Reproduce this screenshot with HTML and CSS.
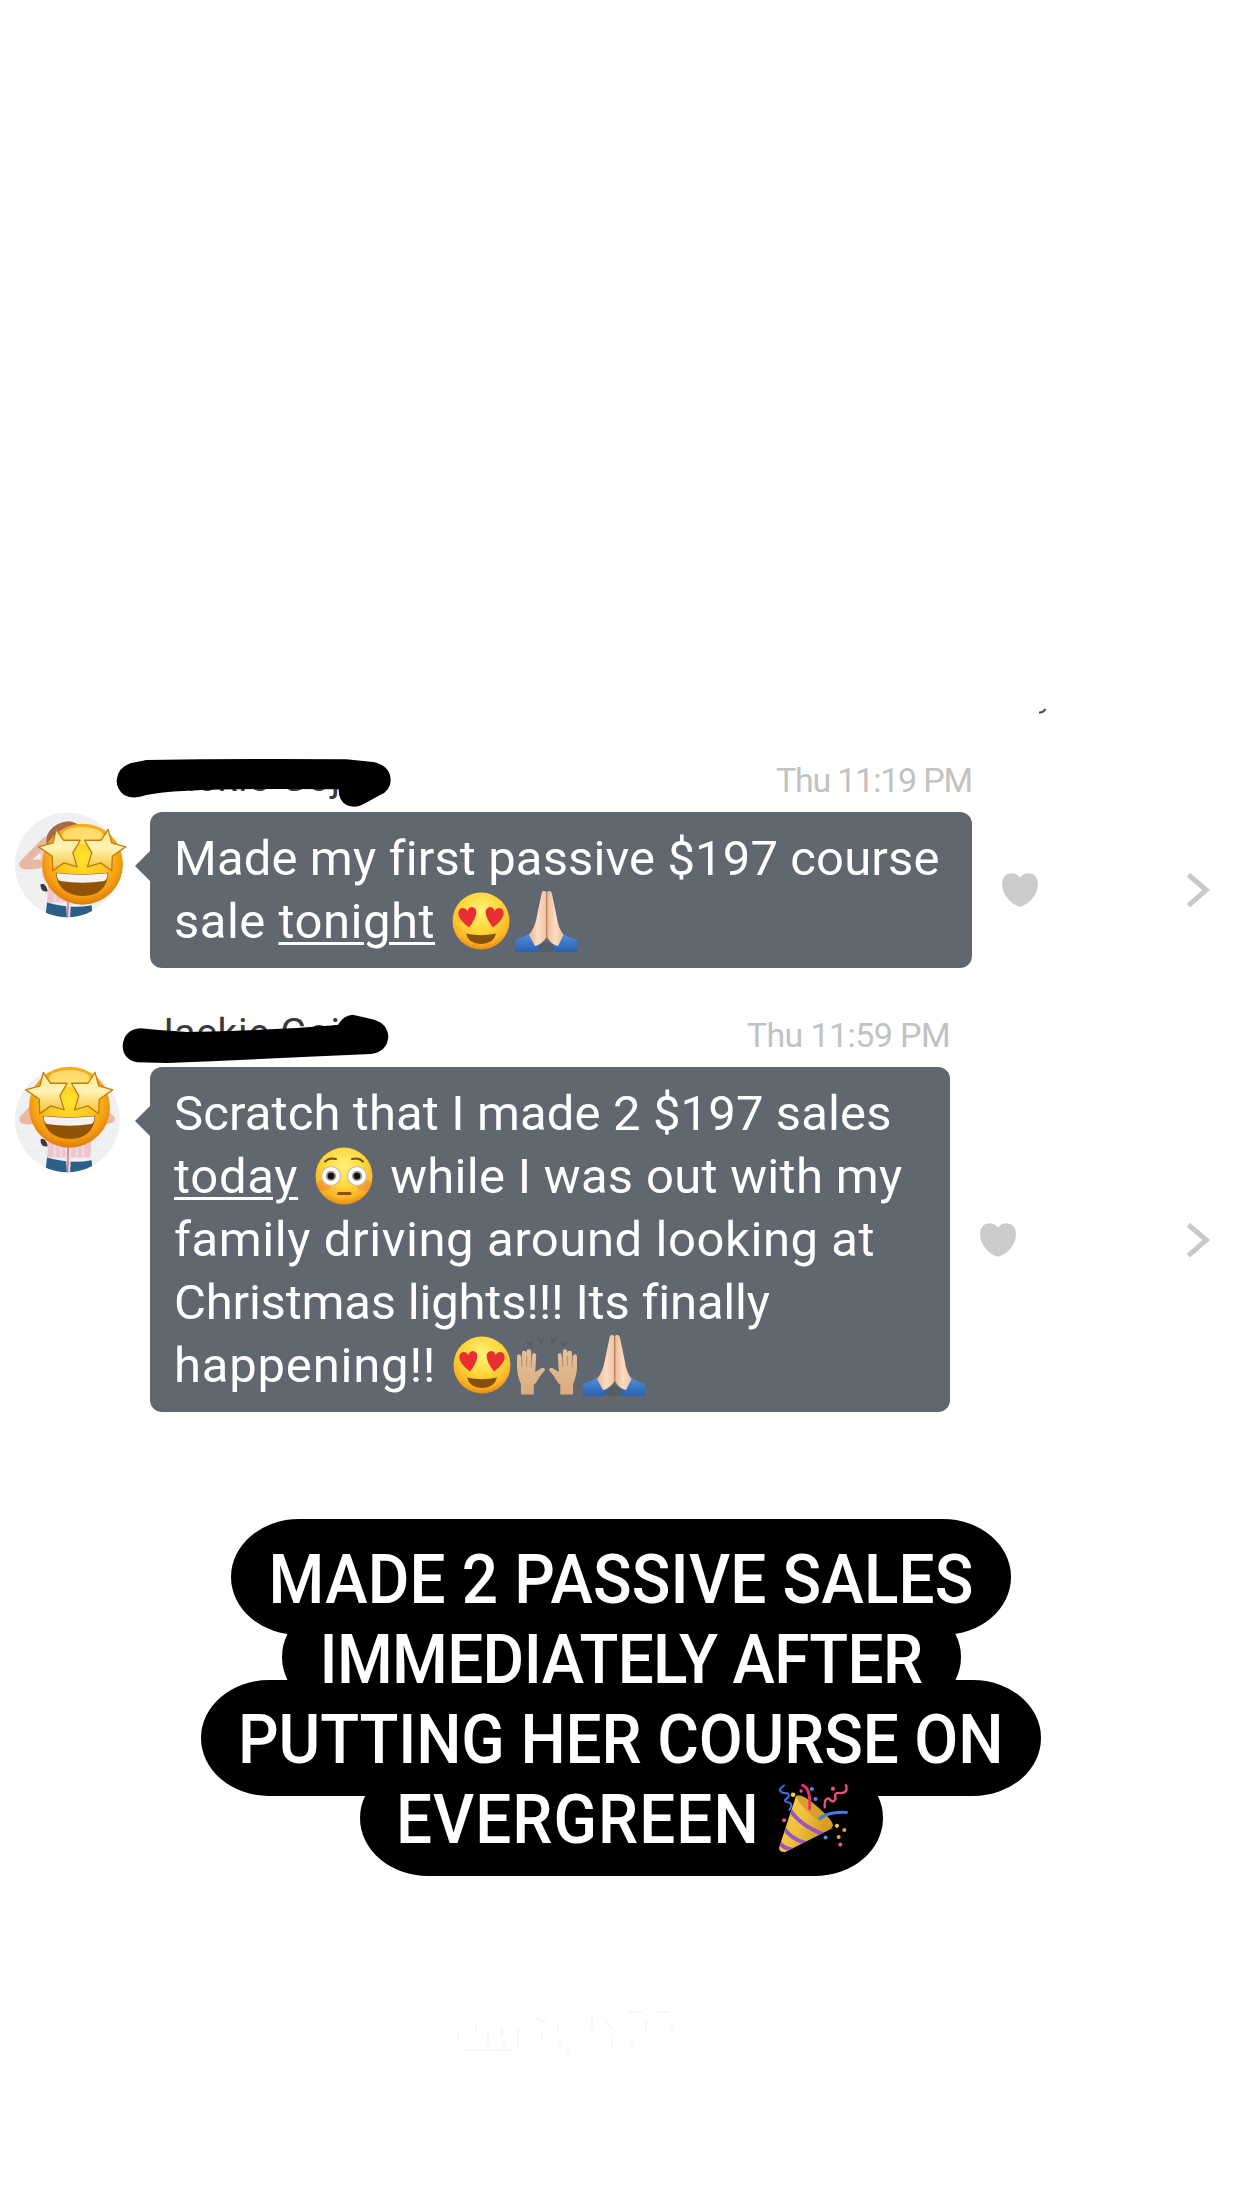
FILE: index.html
```html
<!DOCTYPE html>
<html lang="en">
<head>
  <meta charset="UTF-8">
  <meta name="viewport" content="width=device-width, initial-scale=1.0">
  <title>2 passive sales</title>
  <link rel="stylesheet" href="styles.css">
</head>
<body>
  <!-- shared icons -->
  <svg class="defs" aria-hidden="true">
    <defs>
      <radialGradient id="face" cx="50%" cy="32%" r="68%">
        <stop offset="0" stop-color="#fff27a"/>
        <stop offset="0.5" stop-color="#ffd83c"/>
        <stop offset="0.82" stop-color="#fcb526"/>
        <stop offset="1" stop-color="#e98b10"/>
      </radialGradient>
      <radialGradient id="starFace" cx="50%" cy="42%" r="60%">
        <stop offset="0" stop-color="#ffe52c"/>
        <stop offset="0.5" stop-color="#fdc423"/>
        <stop offset="0.8" stop-color="#f39a12"/>
        <stop offset="1" stop-color="#d87608"/>
      </radialGradient>
      <linearGradient id="star" x1="0" y1="0" x2="0" y2="1">
        <stop offset="0" stop-color="#ffe98a"/>
        <stop offset="0.45" stop-color="#fff3b5"/>
        <stop offset="1" stop-color="#f3c02c"/>
      </linearGradient>
      <linearGradient id="skin" x1="0" y1="0" x2="1" y2="0">
        <stop offset="0" stop-color="#e9b894"/>
        <stop offset="0.5" stop-color="#fbdcc2"/>
        <stop offset="1" stop-color="#efc3a2"/>
      </linearGradient>
      <linearGradient id="palm" x1="0" y1="0" x2="0" y2="1">
        <stop offset="0" stop-color="#e6c09a"/>
        <stop offset="1" stop-color="#d9ac82"/>
      </linearGradient>
      <linearGradient id="sleeve" x1="0" y1="0" x2="0" y2="1">
        <stop offset="0" stop-color="#4d93e2"/>
        <stop offset="1" stop-color="#2a5fae"/>
      </linearGradient>
      <linearGradient id="cone" x1="0" y1="0" x2="1" y2="0.6">
        <stop offset="0" stop-color="#f6d154"/>
        <stop offset="0.5" stop-color="#f0c23c"/>
        <stop offset="1" stop-color="#c98f1c"/>
      </linearGradient>
      <clipPath id="round"><circle cx="203" cy="373" r="157"/></clipPath>
      <clipPath id="coneClip"><path d="M530 888L480 1040Q476 1058 498 1056L640 984Q600 968 530 888z"/></clipPath>

      <symbol id="photo" viewBox="46 215 315 317">
        <g clip-path="url(#round)">
          <rect x="46" y="215" width="315" height="317" fill="#eff0f1"/>
          <path d="M46 292h315M46 350h315M46 408h315M46 466h315" stroke="#e9ebec" stroke-width="3"/>
          <path d="M140 290Q155 248 205 242Q252 246 268 300L270 400L135 400z" fill="#a5694d"/>
          <path d="M136 286L64 360Q52 374 66 384Q90 392 132 380L132 356L98 358L142 318z" fill="#e9b8a3"/>
          <path d="M270 296L340 360Q352 372 338 382Q316 390 272 380L272 356L308 356z" fill="#e9b8a3"/>
          <path d="M122 330L142 316L270 316L276 420L272 486L142 486L146 430L128 410z" fill="#ecc6cd"/>
          <path d="M122 432q10-6 16 4t6 16q-14 4-20-8z" fill="#40383d"/>
          <path d="M165 440v50M184 440v50M232 440v50M250 440v50" stroke="#f3dde2" stroke-width="5"/>
          <path d="M142 486Q208 506 276 494L280 540L136 540z" fill="#2b5f87"/>
          <path d="M198 430L205 535M214 430L208 535" stroke="#efdfe5" stroke-width="6"/>
          <path d="M206 430L204 535" stroke="#c9758f" stroke-width="4"/>
        </g>
      </symbol>

      <symbol id="star-struck" viewBox="72 198 272 250">
        <circle cx="208" cy="322" r="122" fill="url(#starFace)"/>
        <ellipse cx="208" cy="236" rx="62" ry="26" fill="#fff0a0" opacity="0.6"/>
        <g fill="url(#star)" stroke="#c47a12" stroke-width="4" stroke-linejoin="round">
          <path d="M129 217L151 250L201 250L179 288L192 330L152 318L118 342L117 298L76 270L119 258z"/>
          <path d="M285 217L264 250L214 250L236 288L223 330L263 318L296 342L298 298L338 270L296 258z"/>
        </g>
        <path d="M127 348Q208 356 286 348Q280 417 208 418Q136 416 127 348z" fill="#8f5408"/>
        <path d="M130 349Q208 358 283 349Q284 366 274 373Q208 383 140 373Q130 366 130 349z" fill="#f4f3f1"/>
      </symbol>

      <symbol id="heart-eyes" viewBox="0 0 58 58">
        <circle cx="29" cy="29" r="28.5" fill="url(#face)"/>
        <path d="M17 35.500Q7 28 6.300 22Q6.200 16.500 10.500 16Q14 16 15.300 19.200Q17 14.500 21 15.200Q25 16.500 24.200 22Q23 28 17 35.500z" fill="#ea2f34"/>
        <path d="M41 35.500Q51 28 51.700 22Q51.800 16.500 47.500 16Q44 16 42.700 19.200Q41 14.500 37 15.200Q33 16.500 33.800 22Q35 28 41 35.500z" fill="#ea2f34"/>
        <path d="M14 41.500Q29 45 44 41.500Q41.500 52 29 52Q16.500 52 14 41.500z" fill="#85510c"/>
      </symbol>

      <symbol id="flushed" viewBox="0 0 58 58">
        <circle cx="29" cy="29" r="28.5" fill="url(#face)"/>
        <ellipse cx="9" cy="38" rx="7.5" ry="6" fill="#f5793a" opacity="0.45"/>
        <ellipse cx="49" cy="38" rx="7.5" ry="6" fill="#f5793a" opacity="0.45"/>
        <circle cx="16" cy="29" r="9.5" fill="#fff" stroke="#c9b9a4" stroke-width="1.2"/>
        <circle cx="42" cy="29" r="9.5" fill="#fff" stroke="#c9b9a4" stroke-width="1.2"/>
        <circle cx="16" cy="29" r="5" fill="#8c8a88"/>
        <circle cx="42" cy="29" r="5" fill="#8c8a88"/>
        <circle cx="16" cy="29" r="3.2" fill="#111"/>
        <circle cx="42" cy="29" r="3.2" fill="#111"/>
        <path d="M10 14.500Q14.500 10 21 12M48 14.500Q43.500 10 37 12" fill="none" stroke="#7a4b10" stroke-width="2" stroke-linecap="round"/>
        <path d="M23.500 46.500H35" stroke="#8a5210" stroke-width="3" stroke-linecap="round"/>
      </symbol>

      <symbol id="pray" viewBox="0 0 62 62">
        <path d="M0 50Q8 48 15 43L27 57L22 62H0z" fill="url(#sleeve)"/>
        <path d="M62 50Q54 48 47 43L36 57L41 62H62z" fill="url(#sleeve)"/>
        <path d="M22 57L28 52L34 52L40 57L38 62H24z" fill="#4a5560" opacity="0.5"/>
        <path d="M31.500 2Q27 -1 26.500 4L21.500 28Q20 37 14 45L20 56Q28 54 32 46z" fill="url(#skin)"/>
        <path d="M31.500 2Q36 -1 37 4L42 28Q43 37 48.500 45L43 56Q35 54 31.500 46z" fill="url(#skin)"/>
        <path d="M31.700 2V48" stroke="#b9805c" stroke-width="1.3"/>
      </symbol>

      <symbol id="hands" viewBox="0 0 63 62">
        <g id="left-hand">
          <path d="M5 61V50Q1 42 1 32V23Q1 20 3 20T5.500 23L6 31V19Q6 16.500 8.300 16.500T10.800 19V30V17.500Q10.800 15 13 15T15.500 17.500V31L16.500 21Q17 18.500 19 19T20.500 22L19.500 38L26 34Q29 33 29.500 36Q27 39 24 43Q21 49 18 51V61z" fill="url(#palm)"/>
          <path d="M6 24V33M10.800 22V32M15.500 23V33" stroke="#b98b62" stroke-width="0.9" fill="none"/>
        </g>
        <use href="#left-hand" transform="translate(63 0) scale(-1 1)"/>
        <path d="M11 7L15 11L17 6.500M22 3L26 9L27 3M36 3L37 9L41 3M46 6.500L48 11L52 7" fill="none" stroke="#565d63" stroke-width="2.2"/>
      </symbol>

      <symbol id="party" viewBox="476 850 212 212">
        <g clip-path="url(#coneClip)">
          <rect x="470" y="880" width="180" height="185" fill="url(#cone)"/>
          <path d="M512 930Q540 975 610 1003M494 985Q512 1015 560 1030M482 1030Q495 1045 520 1050" fill="none" stroke="#9a55c4" stroke-width="12"/>
        </g>
        <path d="M530 888Q548 880 595 922Q642 964 640 978Q636 992 594 962Q540 918 530 888z" fill="#d8a02a"/>
        <path d="M546 856Q576 862 570 930" fill="none" stroke="#e8355f" stroke-width="9"/>
        <path d="M598 958Q625 934 684 938" fill="none" stroke="#3f7fe0" stroke-width="9"/>
        <path d="M496 856Q470 872 492 880Q514 878 506 894Q486 904 508 908Q524 914 508 932" fill="none" stroke="#3a74dc" stroke-width="6"/>
        <path d="M616 926Q612 896 628 896Q640 914 648 896Q642 876 662 880Q688 880 678 854" fill="none" stroke="#ee4f7c" stroke-width="7"/>
        <g fill="#4d8df0"><circle cx="577" cy="868" r="6"/><circle cx="588" cy="898" r="6"/><circle cx="618" cy="1013" r="6"/></g>
        <g fill="#f4d03a"><circle cx="521" cy="885" r="7"/><circle cx="652" cy="978" r="6"/></g>
        <g fill="#f09a3c"><circle cx="674" cy="990" r="6"/><circle cx="657" cy="1011" r="6"/></g>
        <g fill="#e5588a"><circle cx="640" cy="867" r="6"/><circle cx="545" cy="874" r="5"/><circle cx="494" cy="961" r="6"/><circle cx="662" cy="1034" r="6"/></g>
      </symbol>

      <symbol id="heart" viewBox="126 579 108 101">
        <path d="M180 592Q190 579 207 579Q234 582 234 610Q234 636 215 658Q198 675 180 680Q162 675 145 658Q126 636 126 610Q126 582 153 579Q170 579 180 592z" fill="#cbcbcb"/>
      </symbol>

      <symbol id="chevron" viewBox="678 578 74 106">
        <path d="M685 586L738 631L685 677" fill="none" stroke="#c9c9c9" stroke-width="15"/>
      </symbol>
    </defs>
  </svg>

  <main class="story">
    <svg class="speck" viewBox="0 0 8 6"><path d="M0 4.500Q4 5 6.500 1" fill="none" stroke="#444" stroke-width="2"/></svg>

    <section class="message">
      <header class="message-head">
        <span class="name">Jackie Goj</span>
        <span class="time time-1">Thu 11:19 PM</span>
        <svg class="scribble scribble-1" viewBox="340 45 840 165">
          <path d="M440 60Q740 55 1040 58L1120 66Q1173 76 1173 122Q1172 152 1140 166L1092 192Q1070 206 1042 196Q1016 182 1017 148Q760 144 560 152Q480 156 440 165Q400 180 372 164Q350 146 351 120Q354 84 392 70Z"/>
        </svg>
      </header>
      <div class="avatar">
        <svg class="photo"><use href="#photo"/></svg>
        <svg class="sticker sticker-1"><use href="#star-struck"/></svg>
      </div>
      <div class="bubble">
        <p class="line"><span class="t1">Made my first passive $197 course</span></p>
        <p class="line"><span class="t2">sale <u>tonight</u></span><svg class="emoji first"><use href="#heart-eyes"/></svg><svg class="emoji wide"><use href="#pray"/></svg></p>
      </div>
      <svg class="heart"><use href="#heart"/></svg>
      <svg class="chevron"><use href="#chevron"/></svg>
    </section>

    <section class="message small">
      <header class="message-head">
        <span class="name">Jackie Goj</span>
        <span class="time time-2">Thu 11:59 PM</span>
        <svg class="scribble scribble-2" viewBox="355 40 830 160">
          <path d="M420 86Q480 92 560 97Q800 94 1016 76Q1034 46 1060 45L1125 60Q1166 72 1168 112Q1164 158 1115 164Q800 178 500 191L410 189Q366 180 366 138Q370 90 420 86Z"/>
        </svg>
      </header>
      <div class="avatar">
        <svg class="photo"><use href="#photo"/></svg>
        <svg class="sticker sticker-2"><use href="#star-struck"/></svg>
      </div>
      <div class="bubble">
        <p class="line"><span class="t3">Scratch that I made 2 $197 sales</span></p>
        <p class="line"><u class="t4">today</u><svg class="emoji first"><use href="#flushed"/></svg><span class="t5">while I was out with my</span></p>
        <p class="line"><span class="t6">family driving around looking at</span></p>
        <p class="line"><span class="t7">Christmas lights!!! Its finally</span></p>
        <p class="line"><span class="t8">happening!!</span><svg class="emoji first"><use href="#heart-eyes"/></svg><svg class="emoji wide"><use href="#hands"/></svg><svg class="emoji wide"><use href="#pray"/></svg></p>
      </div>
      <svg class="heart"><use href="#heart"/></svg>
      <svg class="chevron"><use href="#chevron"/></svg>
    </section>

    <h1 class="caption">
      <span class="pill pill-1"><span>MADE 2 PASSIVE SALES</span></span>
      <span class="pill pill-2"><span>IMMEDIATELY AFTER</span></span>
      <span class="pill pill-3"><span>PUTTING HER COURSE ON</span></span>
      <span class="pill pill-4"><span>EVERGREEN</span><svg class="party"><use href="#party"/></svg></span>
    </h1>

    <!-- erased text residue -->
    <svg class="residue" viewBox="0 0 224 50">
      <path d="M2 20v12M8 40h50M20 15v8M32 22v12M46 17v10M48 32v8M62 18v20M80 8l10 4M86 20v10M102 12v8M104 32v8M112 36v8M136 5v14M150 12l8 8M156 28v10M172 2h14M176 28v8M190 10v10M200 2h14M216 12v6"/>
    </svg>
  </main>
</body>
</html>
```
FILE: styles.css
```css
* {
  box-sizing: border-box;
}
body {
  margin: 0;
  background: #fff;
  font-family: Roboto, "Liberation Sans", sans-serif;
}
.defs {
  position: absolute;
  width: 0;
  height: 0;
}
.story {
  position: relative;
  width: 1242px;
  height: 2208px;
  padding-top: 755px;
  overflow: hidden;
}
.speck {
  position: absolute;
  left: 1039px;
  top: 708px;
  width: 8px;
  height: 6px;
}

/* messages */
.message {
  display: grid;
  grid-template-columns: 105px 822px 36px 1fr;
  grid-template-rows: 57px auto;
  column-gap: 30px;
  align-items: center;
  padding: 0 31px 0 15px;
}
.message.small {
  grid-template-columns: 105px 800px 36px 1fr;
  margin-top: 42px;
}
.message-head {
  grid-column: 2;
  position: relative;
  display: flex;
  justify-content: space-between;
  align-items: flex-start;
  height: 57px;
}
.name {
  margin-left: 2px;
  font-size: 39px;
  line-height: 47px;
  letter-spacing: 0.8px;
  color: #3a3a3a;
}
.time {
  font-size: 34px;
  line-height: 51px;
  color: #c2c2c2;
}
.time-1 {
  letter-spacing: -1.2px;
}
.time-2 {
  letter-spacing: -0.6px;
}
.scribble {
  position: absolute;
}
.scribble-1 {
  left: -37px;
  top: 0;
  width: 280px;
  height: 55px;
}
.scribble-2 {
  left: -32px;
  top: 3px;
  width: 277px;
  height: 53px;
}
.avatar {
  grid-column: 1;
  align-self: start;
  position: relative;
  width: 105px;
  height: 106px;
}
.photo {
  display: block;
  width: 105px;
  height: 106px;
}
.sticker {
  position: absolute;
  width: 91px;
  height: 83px;
}
.sticker-1 {
  left: 22px;
  top: 11px;
}
.sticker-2 {
  left: 9px;
  top: -1px;
}
.bubble {
  position: relative;
  padding: 15px 23px 15px 24px;
  border-radius: 12px;
  background: #60676e;
  color: #fff;
}
.bubble::before {
  content: "";
  position: absolute;
  left: -15px;
  top: 39px;
  border: solid transparent;
  border-width: 15px 15px 15px 0;
  border-right-color: #60676e;
}
.line {
  display: flex;
  align-items: center;
  height: 63px;
  margin: 0;
  font-size: 49px;
  line-height: 63px;
  white-space: pre;
}
u {
  text-decoration-thickness: 2.5px;
  text-underline-offset: 4px;
}
.t1 { letter-spacing: 0.12px; }
.t2 { letter-spacing: 0.5px; }
.t3 { letter-spacing: 0.12px; }
.t4 { letter-spacing: 0.7px; }
.t5 { letter-spacing: 0.3px; margin-left: 17px; }
.t6 { letter-spacing: 0.57px; }
.t7 { letter-spacing: -0.2px; }
.t8 { letter-spacing: 0.8px; }
.emoji {
  width: 58px;
  height: 58px;
  margin-top: -2px;
}
.emoji.first {
  margin-left: 17px;
}
.emoji.wide {
  width: 62px;
  height: 62px;
  margin-left: 5px;
}
.heart {
  width: 36px;
  height: 34px;
}
.chevron {
  justify-self: end;
  width: 25px;
  height: 36px;
}

/* caption */
.caption {
  display: flex;
  flex-direction: column;
  align-items: center;
  margin: 107px 0 0;
  font-size: 69px;
  font-weight: 500;
  color: #fff;
}
.pill {
  display: flex;
  align-items: center;
  justify-content: center;
  height: 116px;
  padding-top: 5px;
  border-radius: 68px / 58px;
  background: #000;
  line-height: 110px;
  white-space: nowrap;
}
.pill + .pill {
  margin-top: -35.7px;
}
.pill span {
  position: relative;
  z-index: 1;
  transform: scaleX(0.925);
}
.pill-1 { width: 780px; letter-spacing: 0.2px; }
.pill-2 { width: 679px; letter-spacing: -0.7px; }
.pill-3 { width: 840px; letter-spacing: -0.15px; }
.pill-4 {
  width: 523px;
  padding-left: 36px;
  justify-content: flex-start;
  letter-spacing: 1.1px;
}
.pill-4 span {
  transform-origin: left;
}
.party {
  position: relative;
  z-index: 1;
  width: 71px;
  height: 71px;
  margin: -4px 0 0 -11px;
}
.residue {
  position: absolute;
  left: 456px;
  top: 2010px;
  width: 224px;
  height: 50px;
  fill: none;
  stroke: #f7f7f7;
  stroke-width: 2;
}
```
